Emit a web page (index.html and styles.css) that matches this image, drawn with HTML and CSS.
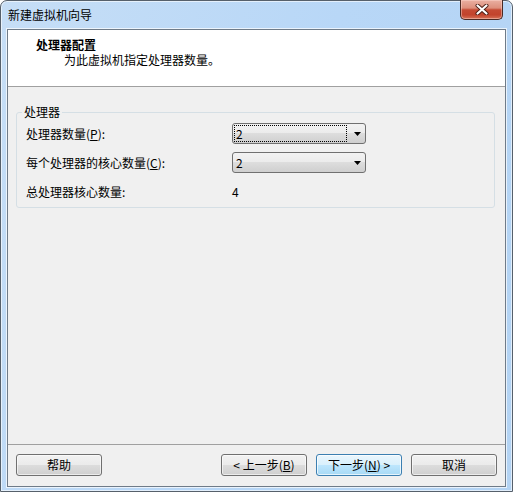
FILE: index.html
```html
<!DOCTYPE html>
<html lang="zh-CN">
<head>
  <meta charset="UTF-8">
  <title>新建虚拟机向导</title>
  <link rel="stylesheet" href="styles.css">
</head>
<body>

  <!-- Wizard window -->
  <div class="window">

    <!-- Title bar -->
    <div class="titlebar">
      <span class="title">新建虚拟机向导</span>
      <button class="close" aria-label="关闭">
        <svg width="14" height="11" viewBox="0 0 14 11">
          <path d="M2.5 1.5 L11.5 9.5 M11.5 1.5 L2.5 9.5" stroke="#4a1d14" stroke-width="4" stroke-linecap="round"/>
          <path d="M2.5 1.5 L11.5 9.5 M11.5 1.5 L2.5 9.5" stroke="#ffffff" stroke-width="2.2" stroke-linecap="round"/>
        </svg>
      </button>
    </div>

    <div class="client">

      <!-- Page header -->
      <div class="header">
        <div class="header-title">处理器配置</div>
        <div class="header-sub">为此虚拟机指定处理器数量。</div>
      </div>

      <!-- Page content -->
      <div class="content">
        <fieldset class="group">
          <legend>处理器</legend>
          <div class="grid">
            <label>处理器数量(<u>P</u>):</label>
            <div class="combo">
              <span class="value focused">2</span>
              <svg class="arrow" width="7" height="4" viewBox="0 0 7 4"><polygon points="0,0 7,0 3.5,4" fill="#000"/></svg>
            </div>

            <label>每个处理器的核心数量(<u>C</u>):</label>
            <div class="combo">
              <span class="value">2</span>
              <svg class="arrow" width="7" height="4" viewBox="0 0 7 4"><polygon points="0,0 7,0 3.5,4" fill="#000"/></svg>
            </div>

            <label>总处理器核心数量:</label>
            <span class="total">4</span>
          </div>
        </fieldset>
      </div>

      <!-- Buttons -->
      <div class="footer">
        <button class="btn">帮助</button>
        <div class="spacer"></div>
        <button class="btn">&lt; 上一步(<u>B</u>)</button>
        <button class="btn default">下一步(<u>N</u>) &gt;</button>
        <button class="btn">取消</button>
      </div>

    </div>
  </div>

</body>
</html>
```

FILE: styles.css
```css
/* General */
body {
  margin: 0;
  font-family: "Noto Sans CJK SC", "Noto Sans", sans-serif;
  font-size: 12px;
  color: #000000;
  background: #ffffff;
}

/* Window frame */
.window {
  width: 513px;
  height: 492px;
  box-sizing: border-box;
  border: 1px solid #56606b;
  border-radius: 7px 7px 0 0;
  background: linear-gradient(110deg, #c6def6 0%, #b8d7f7 50%, #b3d3f3 100%);
  box-shadow: inset 0 0 0 1px rgba(255, 255, 255, 0.6);
  display: flex;
  flex-direction: column;
  padding: 0 6px 4px;
}

/* Title bar */
.titlebar {
  height: 28px;
  display: flex;
  align-items: flex-start;
  justify-content: space-between;
}

.title {
  padding: 6px 0 0 1px;
  line-height: 16px;
}

.close {
  width: 43px;
  height: 20px;
  margin: -1px 3px 0 0;
  padding: 0;
  border: 1px solid #4a2a24;
  border-top: none;
  border-radius: 0 0 5px 5px;
  background: linear-gradient(to bottom, #eab0a2 0%, #dd8f7c 42%, #c54a33 52%, #c2432c 78%, #d67258 100%);
  box-shadow: inset 0 0 0 1px rgba(255, 220, 210, 0.45);
  display: flex;
  align-items: center;
  justify-content: center;
}

/* Client area */
.client {
  flex: 1;
  border: 1px solid #6f7b88;
  box-shadow: 0 0 0 1px rgba(255, 255, 255, 0.7);
  background: #f0f0f0;
  display: flex;
  flex-direction: column;
}

/* Header */
.header {
  height: 57px;
  box-sizing: border-box;
  background: #ffffff;
  border-bottom: 1px solid #a0a0a0;
  padding: 7px 0 0 28px;
}

.header-title {
  font-weight: bold;
  line-height: 15px;
}

.header-sub {
  line-height: 16px;
  padding-left: 28px;
}

/* Content */
.content {
  flex: 1;
  padding: 17px 10px 0 8px;
}

.group {
  margin: 0;
  border: 1px solid #d5dfe5;
  border-radius: 3px;
  padding: 3px 9px 5px 9px;
}

.group legend {
  line-height: 16px;
  padding: 0 2px;
  margin-left: -4px;
}

.grid {
  display: grid;
  grid-template-columns: 206px 134px;
  grid-auto-rows: 21px;
  row-gap: 8px;
  align-items: center;
}

.grid label {
  line-height: 16px;
}

/* Combo box */
.combo {
  width: 134px;
  height: 21px;
  box-sizing: border-box;
  border: 1px solid #707070;
  border-radius: 3px;
  background: linear-gradient(to bottom, #f2f2f2 0%, #ebebeb 50%, #dddddd 50%, #cfcfcf 100%);
  display: flex;
  align-items: center;
  padding: 1px 4px 1px 1px;
}

.combo .value {
  width: 113px;
  height: 17px;
  box-sizing: border-box;
  border: 1px dotted transparent;
  padding-left: 1px;
  line-height: 15px;
}

.combo .value.focused {
  border-color: #000000;
}

.combo .arrow {
  margin-left: auto;
}

/* Footer */
.footer {
  border-top: 1px solid #a0a0a0;
  padding: 9px 8px 10px 8px;
  display: flex;
  gap: 9px;
}

.spacer {
  flex: 1;
}

.btn {
  width: 86px;
  height: 22px;
  box-sizing: border-box;
  border: 1px solid #707070;
  border-radius: 3px;
  background: linear-gradient(to bottom, #f2f2f2 0%, #ebebeb 50%, #dddddd 50%, #cfcfcf 100%);
  box-shadow: inset 0 0 0 1px rgba(255, 255, 255, 0.6);
  font-family: inherit;
  font-size: 12px;
  color: #000000;
  padding: 0;
  line-height: 18px;
}

.btn.default {
  border-color: #3c7fb1;
  background: linear-gradient(to bottom, #eaf6fd 0%, #d9f0fc 50%, #bee6fd 50%, #a7d9f5 100%);
  box-shadow: inset 0 0 0 1px rgba(255, 255, 255, 0.7);
}
```
